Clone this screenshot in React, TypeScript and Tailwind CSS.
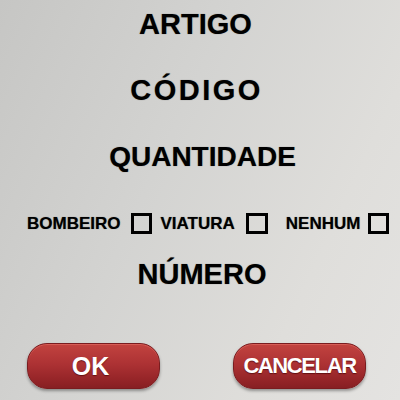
import React from "react";

const font = { fontFamily: '"Liberation Sans", Arial, sans-serif' };

function Box({ w }: { w: string }) {
  return <div className={`${w} h-[21px] shrink-0 border-[3px] border-black bg-transparent`} />;
}

export default function App() {
  return (
    <div
      className="w-[400px] h-[400px] overflow-hidden bg-[linear-gradient(115deg,#c6c6c4_0%,#d3d3d1_40%,#dfdedb_75%,#e4e3e1_100%)] text-black font-bold flex flex-col"
      style={font}
    >
      <div className="mt-[10px] flex justify-center pr-[9px] text-[29px] leading-none h-[29px] [text-shadow:0_0_1px_rgba(0,0,0,0.5)]">ARTIGO</div>
      <div className="mt-[37px] flex justify-center pr-[7px] text-[29px] leading-none h-[29px] tracking-[2.5px] [text-shadow:0_0_1px_rgba(0,0,0,0.5)]">CÓDIGO</div>
      <div className="mt-[38px] flex justify-center pl-[5px] text-[28px] leading-none h-[28px] [text-shadow:0_0_1px_rgba(0,0,0,0.5)]">QUANTIDADE</div>
      <div className="mt-[42px] flex items-center pl-[27px] h-[21px] text-[17px] leading-none [text-shadow:0_0_1px_rgba(0,0,0,0.5)]">
        <span className="shrink-0">BOMBEIRO</span>
        <div className="ml-[10px] shrink-0"><Box w="w-[21px]" /></div>
        <span className="ml-[9px] shrink-0">VIATURA</span>
        <div className="ml-[11px] shrink-0"><Box w="w-[22px]" /></div>
        <span className="ml-[18px] shrink-0">NENHUM</span>
        <div className="ml-[8px] shrink-0"><Box w="w-[21px]" /></div>
      </div>
      <div className="mt-[26px] flex justify-center pl-[4px] text-[29px] leading-none h-[29px] [text-shadow:0_0_1px_rgba(0,0,0,0.5)]">NÚMERO</div>
      <div className="mt-[54px] flex pl-[27px] gap-[73px]">
        <button
          className="w-[133px] h-[46px] shrink-0 rounded-[20px] border border-[#7a1c1f] bg-[linear-gradient(180deg,#c2433f_0%,#ad3234_45%,#962528_80%,#871f23_100%)] shadow-[0_2px_3px_rgba(0,0,0,0.35),inset_0_1px_0_rgba(255,140,130,0.35)] flex items-center justify-center text-white text-[25px] leading-none [text-shadow:0_1px_1px_rgba(60,0,0,0.6)]"
          style={font}
        >
          <span className="pr-[6px]">OK</span>
        </button>
        <button
          className="w-[133px] h-[46px] shrink-0 rounded-[20px] border border-[#7a1c1f] bg-[linear-gradient(180deg,#c2433f_0%,#ad3234_45%,#962528_80%,#871f23_100%)] shadow-[0_2px_3px_rgba(0,0,0,0.35),inset_0_1px_0_rgba(255,140,130,0.35)] flex items-center justify-center text-white text-[22px] leading-none tracking-[-1.4px] [text-shadow:0_1px_1px_rgba(60,0,0,0.6)]"
          style={font}
        >
          CANCELAR
        </button>
      </div>
    </div>
  );
}
